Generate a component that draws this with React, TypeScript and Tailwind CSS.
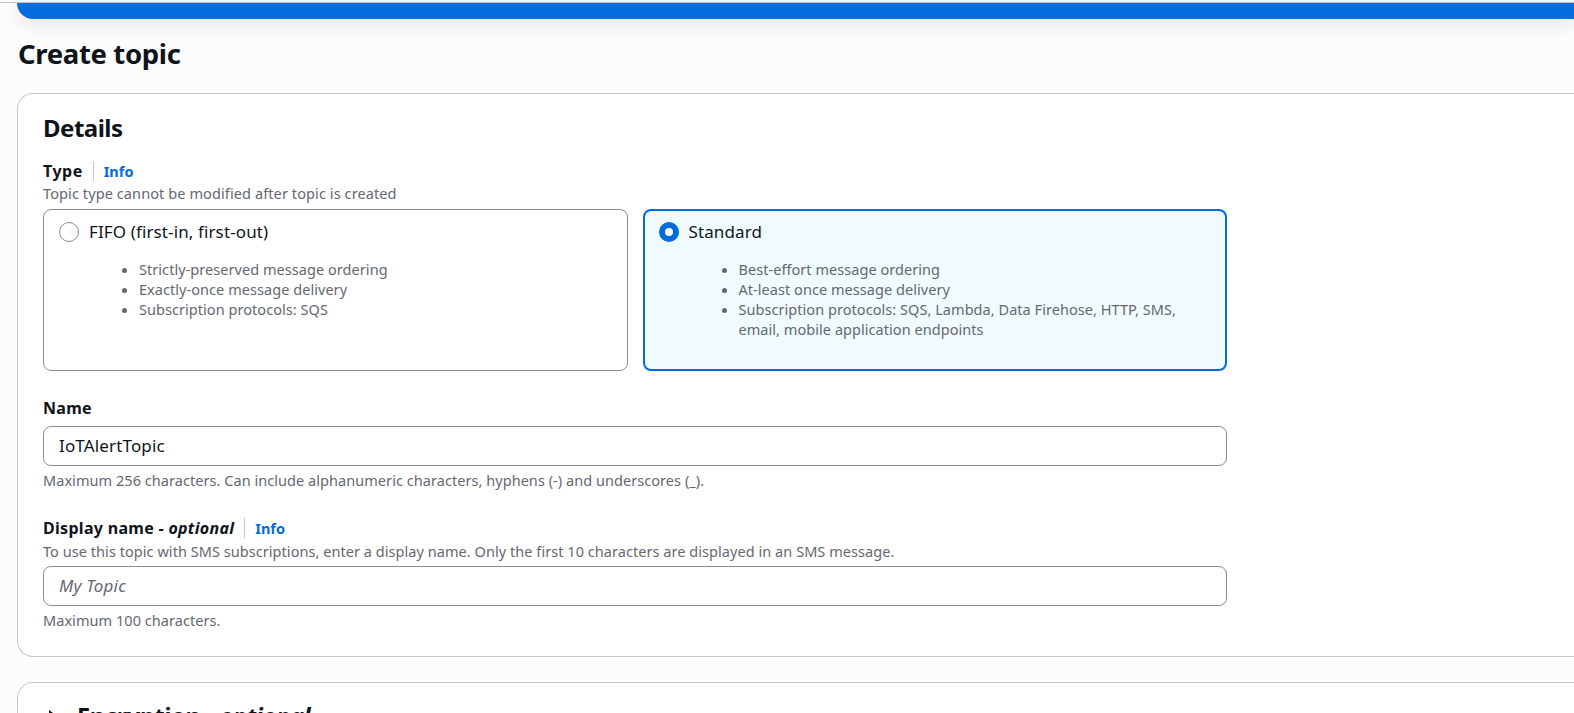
function Info() {
  return (
    <span className="ml-[10px] flex items-center border-l border-[#c6c6cd] pl-[10px] h-[20px]">
      <span className="text-[14.5px] font-bold text-[#006ce0] leading-[20px]">Info</span>
    </span>
  );
}

function TypeCard({
  title,
  items,
  selected,
}: {
  title: string;
  items: string[];
  selected?: boolean;
}) {
  return (
    <div
      className={
        selected
          ? "h-[162px] rounded-[8px] border-2 border-[#006ce0] bg-[#f0fbff] px-[14px] pt-[9px]"
          : "h-[162px] rounded-[8px] border border-[#8c8c94] bg-white px-[15px] pt-[10px]"
      }
    >
      <div className="flex items-center gap-[10px] h-[24px]">
        {selected ? (
          <span className="w-[20px] h-[20px] rounded-full border-[6px] border-[#006ce0] bg-white" />
        ) : (
          <span className="w-[20px] h-[20px] rounded-full border border-[#8c8c94] bg-white" />
        )}
        <span className="text-[17px] tracking-[0.12px] leading-[24px] text-[#0f141a]">{title}</span>
      </div>
      <ul className="mt-[15px] ml-[80px] list-disc pr-[20px] text-[14.5px] tracking-[0.05px] leading-[20px] marker:text-[#656871]">
        {items.map((item) => (
          <li key={item} className="text-[#656871]">
            {item}
          </li>
        ))}
      </ul>
    </div>
  );
}

export default function App() {
  return (
    <div
      className="h-[713px] overflow-hidden bg-[#fcfcfc] pl-[17px] text-[#0f141a]"
      style={{ fontFamily: '"Noto Sans", "Open Sans", sans-serif' }}
    >
      {/* Top banner */}
      <div className="-ml-[17px] mt-[2px] h-[1px] bg-[#c6c6cd]" />
      <div className="h-[16px] rounded-bl-[16px] bg-[#006ce0] shadow-[0_4px_20px_1px_rgba(0,7,22,0.10)]" />

      <h1 className="ml-[1px] mt-[17px] text-[27.5px] font-bold leading-[36px] tracking-[-0.35px]">
        Create topic
      </h1>

      {/* Details */}
      <div className="mt-[21px] h-[564px] rounded-l-[16px] border border-r-0 border-[#c6c6cd] bg-white pl-[25px] pt-[19px]">
        <h2 className="text-[24px] font-bold leading-[30px] tracking-[-0.5px]">Details</h2>

        <div className="mt-[16px] w-[1184px]">
          <div className="flex items-center h-[24px]">
            <span className="text-[16px] tracking-[0.5px] font-bold leading-[24px]">Type</span>
            <Info />
          </div>
          <p className="text-[14.5px] tracking-[0.1px] leading-[20px] text-[#656871]">
            Topic type cannot be modified after topic is created
          </p>
          <div className="mt-[6px] grid grid-cols-2 gap-[15px]">
            <TypeCard
              title="FIFO (first-in, first-out)"
              items={[
                "Strictly-preserved message ordering",
                "Exactly-once message delivery",
                "Subscription protocols: SQS",
              ]}
            />
            <TypeCard
              selected
              title="Standard"
              items={[
                "Best-effort message ordering",
                "At-least once message delivery",
                "Subscription protocols: SQS, Lambda, Data Firehose, HTTP, SMS, email, mobile application endpoints",
              ]}
            />
          </div>

          {/* Name */}
          <div className="mt-[25px] text-[16px] tracking-[0.3px] font-bold leading-[24px]">Name</div>
          <div className="mt-[6px] flex h-[40px] items-center rounded-[8px] border border-[#8c8c94] bg-white px-[15px] text-[17px] tracking-[0.15px] text-[#0f141a]">
            IoTAlertTopic
          </div>
          <p className="mt-[4px] text-[14.5px] tracking-[0.05px] leading-[20px] text-[#656871]">
            Maximum 256 characters. Can include alphanumeric characters, hyphens (-) and underscores (_).
          </p>

          {/* Display name */}
          <div className="mt-[26px] flex h-[24px] items-center">
            <span className="text-[16px] tracking-[0.3px] font-bold leading-[24px]">
              Display name - <i>optional</i>
            </span>
            <Info />
          </div>
          <p className="mt-[1px] text-[14.5px] tracking-[0.05px] leading-[20px] text-[#656871]">
            To use this topic with SMS subscriptions, enter a display name. Only the first 10 characters are displayed in an SMS message.
          </p>
          <div className="mt-[5px] flex h-[40px] items-center rounded-[8px] border border-[#8c8c94] bg-white px-[15px] text-[17px] tracking-[0.2px] italic text-[#656871]">
            My Topic
          </div>
          <p className="mt-[4px] text-[14.5px] tracking-[0.05px] leading-[20px] text-[#656871]">Maximum 100 characters.</p>
        </div>
      </div>

      {/* Encryption */}
      <div className="mt-[25px] h-[80px] rounded-l-[16px] border border-r-0 border-[#c6c6cd] bg-white pl-[30px] pt-[18px]">
        <div className="flex items-center gap-[19px]">
          <svg width="10" height="12" viewBox="0 0 10 12" className="text-[#0f141a]">
            <path d="M1 0l8 6-8 6z" fill="currentColor" />
          </svg>
          <span className="text-[23.5px] font-bold leading-[30px] tracking-[-0.3px]">
            Encryption - <i>optional</i>
          </span>
        </div>
      </div>
    </div>
  );
}
